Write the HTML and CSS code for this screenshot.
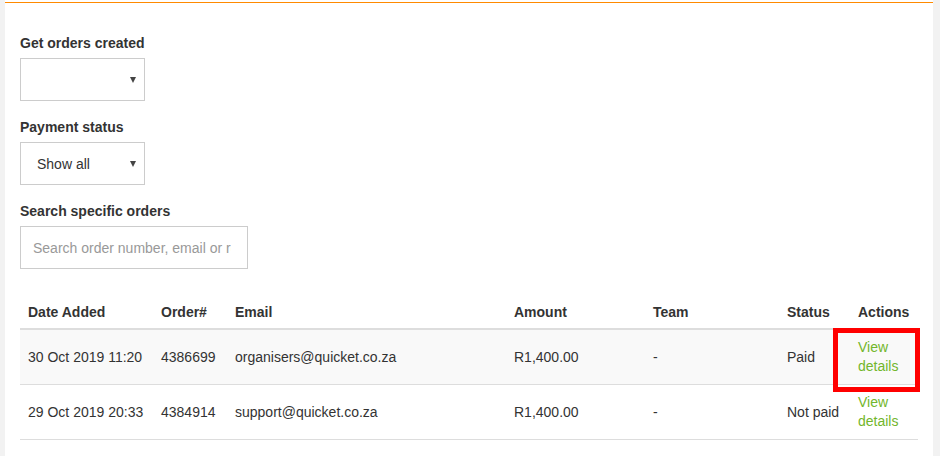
FILE: index.html
```html
<!DOCTYPE html>
<html>
<head>
<meta charset="utf-8">
<link rel="stylesheet" href="styles.css">
</head>
<body>
<div class="panel">
  <div class="accent"></div>
  <div class="content">
    <div class="field">
      <label class="label">Get orders created</label>
      <div class="select"><span class="select-text"></span><span class="caret"></span></div>
    </div>
    <div class="field">
      <label class="label">Payment status</label>
      <div class="select"><span class="select-text">Show all</span><span class="caret"></span></div>
    </div>
    <div class="field">
      <label class="label">Search specific orders</label>
      <input class="search" type="text" placeholder="Search order number, email or reference">
    </div>
    <div class="table-wrap">
      <table class="orders">
        <colgroup>
          <col class="c-date"><col class="c-order"><col class="c-email"><col class="c-amount"><col class="c-team"><col class="c-status"><col class="c-actions">
        </colgroup>
        <thead>
          <tr><th>Date Added</th><th>Order#</th><th>Email</th><th>Amount</th><th>Team</th><th>Status</th><th>Actions</th></tr>
        </thead>
        <tbody>
          <tr class="striped"><td>30 Oct 2019 11:20</td><td>4386699</td><td>organisers@quicket.co.za</td><td>R1,400.00</td><td>-</td><td>Paid</td><td><a href="#" class="link">View details</a></td></tr>
          <tr><td>29 Oct 2019 20:33</td><td>4384914</td><td>support@quicket.co.za</td><td>R1,400.00</td><td>-</td><td>Not paid</td><td><a href="#" class="link">View details</a></td></tr>
        </tbody>
      </table>
      <div class="highlight"></div>
    </div>
  </div>
</div>
</body>
</html>
```
FILE: styles.css
```css
html, body {
  margin: 0;
  padding: 0;
}
body {
  background: #f2f2f2;
  font-family: "Liberation Sans", Arial, sans-serif;
  font-size: 14px;
  color: #333;
}
.panel {
  margin-left: 5px;
  width: 928px;
  height: 456px;
  background: #fff;
  padding-top: 2px;
  box-sizing: border-box;
}
.accent {
  height: 1px;
  background: #ff8a00;
}
.content {
  padding: 30px 15px 0 15px;
}
.field {
  display: flex;
  flex-direction: column;
  align-items: flex-start;
  margin-bottom: 16px;
}
.label {
  font-weight: bold;
  line-height: 20px;
  margin-bottom: 5px;
}
.select {
  width: 125px;
  height: 43px;
  box-sizing: border-box;
  border: 1px solid #ccc;
  display: flex;
  align-items: center;
  justify-content: space-between;
  padding: 0 8px 0 16px;
}
.select-text {
  color: #333;
}
.caret {
  width: 0;
  height: 0;
  border-left: 3px solid transparent;
  border-right: 3px solid transparent;
  border-top: 6px solid #444;
  margin-top: 1px;
}
.search {
  width: 228px;
  height: 43px;
  box-sizing: border-box;
  border: 1px solid #ccc;
  padding: 0 16px 0 12px;
  font-family: "Liberation Sans", Arial, sans-serif;
  font-size: 14px;
  color: #333;
  outline: none;
  margin: 0;
}
.search::placeholder {
  color: #999;
}
.table-wrap {
  position: relative;
  margin-top: 26px;
}
.orders {
  width: 898px;
  border-collapse: collapse;
  table-layout: fixed;
}
.c-date { width: 133px; }
.c-order { width: 74px; }
.c-email { width: 279px; }
.c-amount { width: 139px; }
.c-team { width: 134px; }
.c-status { width: 71px; }
.c-actions { width: 68px; }
.orders th {
  text-align: left;
  font-weight: bold;
  padding: 8px 8px 6px 8px;
  line-height: 19px;
  border-bottom: 2px solid #ddd;
}
.orders td {
  padding: 8px 8px;
  line-height: 19px;
  border-bottom: 1px solid #ddd;
  vertical-align: middle;
  white-space: nowrap;
}
.orders td:last-child {
  white-space: normal;
}
.striped td {
  background: #f9f9f9;
}
.link {
  color: #72b62b;
  text-decoration: none;
}
.highlight {
  position: absolute;
  left: 813px;
  top: 33px;
  width: 87px;
  height: 64px;
  box-sizing: border-box;
  border: 5px solid #ff0000;
}
```
